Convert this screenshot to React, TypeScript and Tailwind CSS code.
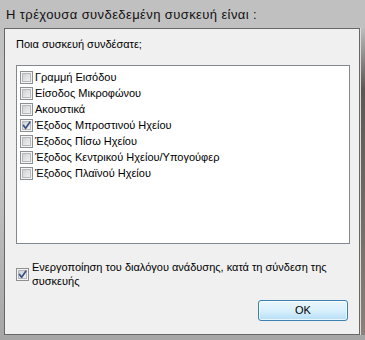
import React from 'react';

const devices = [
  { label: 'Γραμμή Εισόδου', checked: false },
  { label: 'Είσοδος Μικροφώνου', checked: false },
  { label: 'Ακουστικά', checked: false },
  { label: 'Έξοδος Μπροστινού Ηχείου', checked: true },
  { label: 'Έξοδος Πίσω Ηχείου', checked: false },
  { label: 'Έξοδος Κεντρικού Ηχείου/Υπογούφερ', checked: false },
  { label: 'Έξοδος Πλαϊνού Ηχείου', checked: false },
];

function CheckBox({ checked }: { checked: boolean }) {
  return (
    <div className="w-[13px] h-[13px] shrink-0 border border-[#8e8f8f] bg-[#f4f4f4] p-[1px]">
      <div className="relative w-full h-full border border-[#b6b8ba] bg-linear-to-br from-[#cfd1d3] to-[#f2f2f2]">
        {checked && (
          <svg className="absolute -left-[2px] -top-[2px]" width="11" height="11" viewBox="0 0 11 11">
            <path d="M2.5 5.5 L4.6 8.3 L8.8 2.2" fill="none" stroke="#3a5189" strokeWidth="1.7" strokeLinecap="round" strokeLinejoin="round" />
          </svg>
        )}
      </div>
    </div>
  );
}

export default function App() {
  return (
    <div className="w-[365px] h-[340px] flex flex-col overflow-hidden bg-linear-to-b from-[#c0c0c0] via-[#c4c4c4] to-[#a6a6a6] font-['Liberation_Sans',Arial,sans-serif] text-[11px] leading-[13px] text-black">
      {/* Title bar */}
      <div className="h-[28px] shrink-0 flex items-center pl-[6px] text-[13px] tracking-[0.4px] text-[#111]">
        Η τρέχουσα συνδεδεμένη συσκευή είναι :
      </div>

      <div className="flex-1 flex pl-[4px] pb-[5px]">
        {/* Client area */}
        <div className="flex-1 flex flex-col bg-[#f0f0f0] border border-[#676767] pl-[11px] pr-[9px] pt-[9px]">
          <div className="mb-[14px]">Ποια συσκευή συνδέσατε;</div>

          <div className="h-[179px] border border-[#828790] bg-white pt-[3px] pl-[3px]">
            {devices.map((d) => (
              <div key={d.label} className="h-[16px] flex items-center gap-[2px]">
                <CheckBox checked={d.checked} />
                <span className="whitespace-nowrap">{d.label}</span>
              </div>
            ))}
          </div>

          <div className="mt-[16px] flex items-center gap-[3px] leading-[14px]">
            <CheckBox checked />
            <span>Ενεργοποίηση του διαλόγου ανάδυσης, κατά τη σύνδεση της συσκευής</span>
          </div>

          <button className="self-end mt-[12px] mr-[2px] w-[90px] h-[21px] rounded-[3px] border border-[#3c7fb1] bg-linear-to-b from-[#eaf6fd] via-[#d9f0fc] to-[#b6def6] shadow-[inset_0_0_0_1px_rgba(255,255,255,0.7)] text-[11px] text-black">
            OK
          </button>
        </div>

        {/* Right frame edge */}
        <div className="w-[5px] shrink-0 border-l border-[#dcdcdc] bg-linear-to-b from-[#bdbdbd] via-[#5e5753] via-20% to-[#8c8079]" />
      </div>
    </div>
  );
}
